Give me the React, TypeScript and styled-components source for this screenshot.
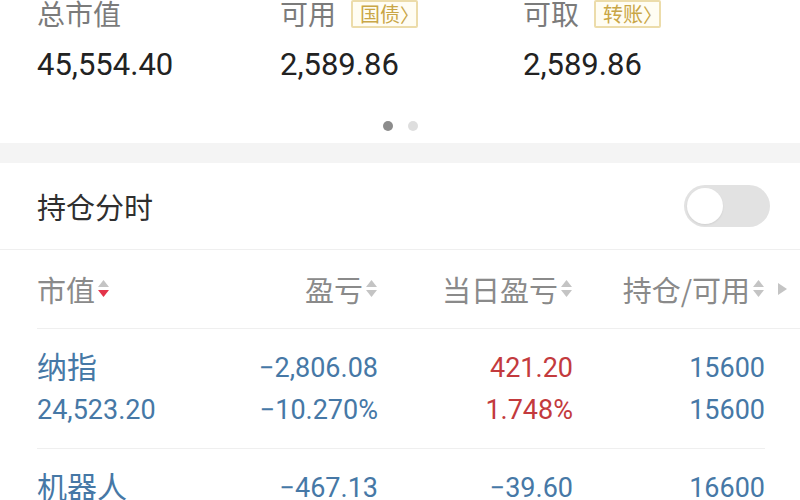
import React, { useState } from 'react';
import styled, { createGlobalStyle } from 'styled-components';

const GlobalStyle = createGlobalStyle`
  html, body {
    margin: 0;
    padding: 0;
    background: #ffffff;
  }
  body {
    width: 800px;
    height: 500px;
    overflow: hidden;
    font-family: Roboto, "Noto Sans CJK SC", sans-serif;
  }
`;

const Page = styled.div`
  width: 800px;
  background: #fff;
`;

const Summary = styled.div`
  padding: 0 0 12px 37px;
`;

const Stats = styled.div`
  display: grid;
  grid-template-columns: 243px 243px 243px;
  margin-top: -2px;
`;

const Stat = styled.div`
  display: flex;
  flex-direction: column;
`;

const LabelRow = styled.div`
  display: flex;
  align-items: center;
  height: 29px;
`;

const Label = styled.span`
  font-size: 28px;
  line-height: 28px;
  color: #7b7b7b;
  font-family: "Noto Sans CJK SC", sans-serif;
`;

const Badge = styled.span`
  display: inline-flex;
  align-items: center;
  height: 24px;
  margin-left: 15px;
  margin-top: 3px;
  padding: 0 6px 0 7px;
  border: 2px solid #ecdcaa;
  border-radius: 2px;
  background: #fffdf3;
  color: #c9a646;
  font-size: 20px;
  font-family: "Noto Sans CJK SC", sans-serif;
  line-height: 1;
`;

const Chevron = styled.span`
  margin-right: -9px;
  font-size: 19px;
`;

const Value = styled.div`
  margin-top: 22px;
  font-size: 31px;
  line-height: 31px;
  color: #222;
`;

const Dots = styled.div`
  display: flex;
  justify-content: center;
  gap: 15px;
  margin-top: 41px;
  padding-right: 37px;
`;

const Dot = styled.span<{ $active?: boolean }>`
  width: 10px;
  height: 10px;
  border-radius: 50%;
  background: ${p => (p.$active ? '#8c8c8c' : '#dedede')};
`;

const Band = styled.div`
  height: 20px;
  background: #f4f4f4;
`;

const SectionHead = styled.div`
  display: flex;
  align-items: center;
  justify-content: space-between;
  height: 86px;
  padding: 0 30px 0 37px;
  border-bottom: 1px solid #efefef;
`;

const SectionTitle = styled.span`
  font-size: 29px;
  color: #2f2f2f;
  font-family: "Noto Sans CJK SC", sans-serif;
`;

const Toggle = styled.button<{ $on: boolean }>`
  width: 86px;
  height: 42px;
  border: none;
  padding: 3px;
  border-radius: 21px;
  background: ${p => (p.$on ? '#e0344a' : '#e2e2e2')};
  display: flex;
  justify-content: ${p => (p.$on ? 'flex-end' : 'flex-start')};
  cursor: pointer;
`;

const Knob = styled.span`
  width: 36px;
  height: 36px;
  border-radius: 50%;
  background: #fff;
  box-shadow: 0 1px 2px rgba(0, 0, 0, 0.08);
`;

const HeadRow = styled.div`
  display: grid;
  grid-template-columns: 1fr 178px 195px 192px 35px;
  align-items: center;
  height: 78px;
  margin-left: 37px;
  border-bottom: 1px solid #efefef;
`;

const HeadCell = styled.div<{ $right?: boolean }>`
  display: flex;
  align-items: center;
  justify-content: ${p => (p.$right ? 'flex-end' : 'flex-start')};
  gap: 2px;
  font-size: 29px;
  color: #8a8a8a;
  font-family: "Noto Sans CJK SC", sans-serif;
  white-space: nowrap;
`;

const More = styled.div`
  display: flex;
  align-items: center;
  padding-left: 12px;
`;

const Row = styled.div`
  display: grid;
  grid-template-columns: 1fr 178px 195px 192px;
  padding: 18px 0 17px;
  margin: 0 35px 0 37px;
  border-bottom: 1px solid #efefef;
`;

const Cell = styled.div<{ $right?: boolean; $tone?: 'blue' | 'red' }>`
  display: flex;
  flex-direction: column;
  align-items: ${p => (p.$right ? 'flex-end' : 'flex-start')};
  color: ${p => (p.$tone === 'red' ? '#c33a3d' : '#4678a6')};
`;

const Line = styled.span<{ $name?: boolean }>`
  height: 42px;
  line-height: 42px;
  font-size: ${p => (p.$name ? '30px' : '27px')};
  white-space: nowrap;
`;

function SortIcon({ active }: { active?: boolean }) {
  return (
    <svg width="13" height="22" viewBox="0 0 13 22">
      <path d="M6.5 2 L12 9 L1 9 Z" fill="#c4c4c4" />
      <path d="M1 12 L12 12 L6.5 19 Z" fill={active ? '#e3344a' : '#c4c4c4'} />
    </svg>
  );
}

const positions = [
  {
    name: '纳指',
    value: '24,523.20',
    pnl: '−2,806.08',
    pnlPct: '−10.270%',
    day: '421.20',
    dayPct: '1.748%',
    dayTone: 'red' as const,
    hold: '15600',
    avail: '15600',
  },
  {
    name: '机器人',
    value: '',
    pnl: '−467.13',
    pnlPct: '',
    day: '−39.60',
    dayPct: '',
    dayTone: 'blue' as const,
    hold: '16600',
    avail: '',
  },
];

export default function App() {
  const [intraday, setIntraday] = useState(false);

  return (
    <Page>
      <GlobalStyle />
      <Summary>
        <Stats>
          <Stat>
            <LabelRow>
              <Label>总市值</Label>
            </LabelRow>
            <Value>45,554.40</Value>
          </Stat>
          <Stat>
            <LabelRow>
              <Label>可用</Label>
              <Badge>
                国债<Chevron>〉</Chevron>
              </Badge>
            </LabelRow>
            <Value>2,589.86</Value>
          </Stat>
          <Stat>
            <LabelRow>
              <Label>可取</Label>
              <Badge>
                转账<Chevron>〉</Chevron>
              </Badge>
            </LabelRow>
            <Value>2,589.86</Value>
          </Stat>
        </Stats>
        <Dots>
          <Dot $active />
          <Dot />
        </Dots>
      </Summary>
      <Band />
      <SectionHead>
        <SectionTitle>持仓分时</SectionTitle>
        <Toggle $on={intraday} onClick={() => setIntraday(!intraday)}>
          <Knob />
        </Toggle>
      </SectionHead>
      <HeadRow>
        <HeadCell>
          市值
          <SortIcon active />
        </HeadCell>
        <HeadCell $right>
          盈亏
          <SortIcon />
        </HeadCell>
        <HeadCell $right>
          当日盈亏
          <SortIcon />
        </HeadCell>
        <HeadCell $right>
          持仓/可用
          <SortIcon />
        </HeadCell>
        <More>
          <svg width="11" height="14" viewBox="0 0 11 14">
            <path d="M1 1 L10 7 L1 13 Z" fill="#c4c4c4" />
          </svg>
        </More>
      </HeadRow>
      {positions.map(p => (
        <Row key={p.name}>
          <Cell>
            <Line $name>{p.name}</Line>
            {p.value && <Line>{p.value}</Line>}
          </Cell>
          <Cell $right>
            <Line>{p.pnl}</Line>
            {p.pnlPct && <Line>{p.pnlPct}</Line>}
          </Cell>
          <Cell $right $tone={p.dayTone}>
            <Line>{p.day}</Line>
            {p.dayPct && <Line>{p.dayPct}</Line>}
          </Cell>
          <Cell $right>
            <Line>{p.hold}</Line>
            {p.avail && <Line>{p.avail}</Line>}
          </Cell>
        </Row>
      ))}
    </Page>
  );
}
